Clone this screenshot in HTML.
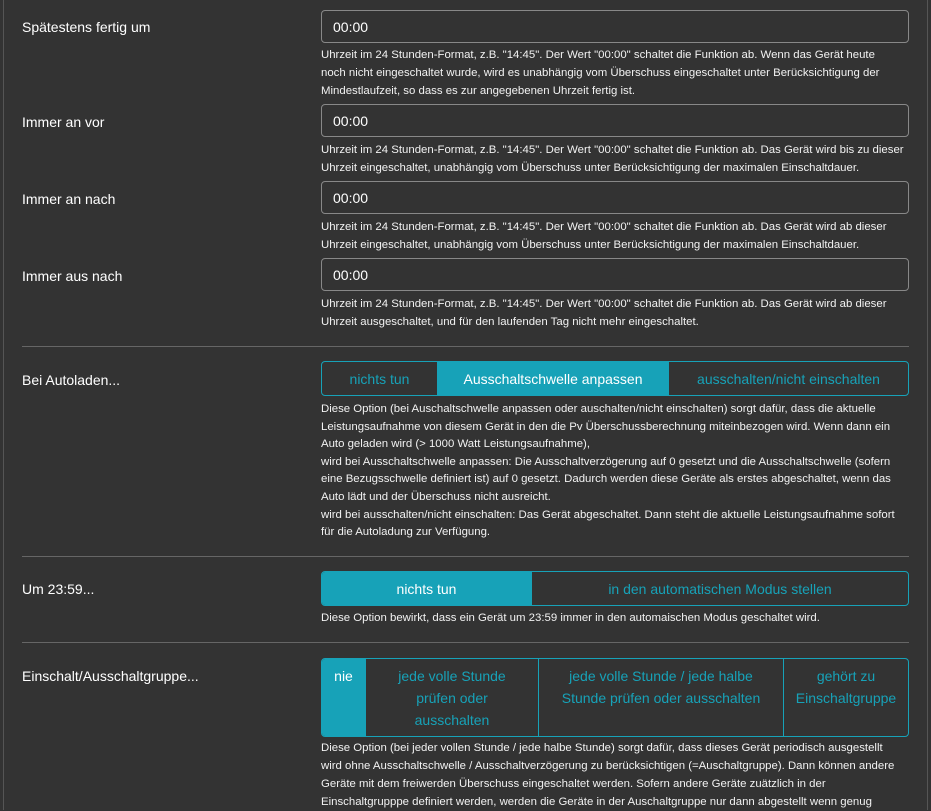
<!DOCTYPE html>
<html><head><meta charset="utf-8"><style>
body{margin:0;width:931px;height:810px;background:#333;overflow:hidden;font-family:"Liberation Sans",sans-serif;color:#fff;position:relative}
.b{position:absolute;top:0;bottom:0;width:1px;background:#555}
.l{position:absolute;left:22px;font-size:14px;line-height:18px}
.in{position:absolute;left:321px;width:586px;height:31px;border:1px solid #888;border-radius:4px;box-sizing:content-box;font-size:14px;line-height:33px;padding-left:0}
.in span{margin-left:11px}
.h{position:absolute;left:321px;width:584px;font-size:11.4px;line-height:18px;color:#f2f2f2}
.hr{position:absolute;left:22px;width:887px;height:1px;background:#666}
.g{position:absolute;left:321px;border:1px solid #17a2b8;border-radius:4px;display:flex;box-sizing:border-box;overflow:hidden}
.g div{display:flex;align-items:center;justify-content:center;text-align:center;color:#17a2b8;font-size:14px;line-height:22px;border-left:1px solid #17a2b8;box-sizing:border-box}
.g div:first-child{border-left:none}
.g div.a{background:#17a2b8;color:#fff}
</style></head><body>
<div class="b" style="left:3px"></div><div class="b" style="left:927px"></div>
<div class="l" style="top:18px">Spätestens fertig um</div>
<div class="in" style="top:10px"><span>00:00</span></div>
<div class="h" style="top:46px">Uhrzeit im 24 Stunden-Format, z.B. "14:45". Der Wert "00:00" schaltet die Funktion ab. Wenn das Gerät heute<br>noch nicht eingeschaltet wurde, wird es unabhängig vom Überschuss eingeschaltet unter Berücksichtigung der<br>Mindestlaufzeit, so dass es zur angegebenen Uhrzeit fertig ist.</div>
<div class="l" style="top:113px">Immer an vor</div>
<div class="in" style="top:104px"><span>00:00</span></div>
<div class="h" style="top:141px">Uhrzeit im 24 Stunden-Format, z.B. "14:45". Der Wert "00:00" schaltet die Funktion ab. Das Gerät wird bis zu dieser Uhrzeit eingeschaltet, unabhängig vom Überschuss unter Berücksichtigung der maximalen Einschaltdauer.</div>
<div class="l" style="top:190px">Immer an nach</div>
<div class="in" style="top:181px"><span>00:00</span></div>
<div class="h" style="top:218px">Uhrzeit im 24 Stunden-Format, z.B. "14:45". Der Wert "00:00" schaltet die Funktion ab. Das Gerät wird ab dieser Uhrzeit eingeschaltet, unabhängig vom Überschuss unter Berücksichtigung der maximalen Einschaltdauer.</div>
<div class="l" style="top:267px">Immer aus nach</div>
<div class="in" style="top:258px"><span>00:00</span></div>
<div class="h" style="top:295px">Uhrzeit im 24 Stunden-Format, z.B. "14:45". Der Wert "00:00" schaltet die Funktion ab. Das Gerät wird ab dieser Uhrzeit ausgeschaltet, und für den laufenden Tag nicht mehr eingeschaltet.</div>
<div class="hr" style="top:346px"></div>
<div class="l" style="top:371px">Bei Autoladen...</div>
<div class="g" style="top:361px;width:588px;height:35px"><div style="width:115px">nichts tun</div><div class="a" style="width:231px">Ausschaltschwelle anpassen</div><div style="flex:1">ausschalten/nicht einschalten</div></div>
<div class="h" style="top:401px;line-height:17.6px">Diese Option (bei Auschaltschwelle anpassen oder auschalten/nicht einschalten) sorgt dafür, dass die aktuelle Leistungsaufnahme von diesem Gerät in den die Pv Überschussberechnung miteinbezogen wird. Wenn dann ein Auto geladen wird (&gt; 1000 Watt Leistungsaufnahme),<br>wird bei Ausschaltschwelle anpassen: Die Ausschaltverzögerung auf 0 gesetzt und die Ausschaltschwelle (sofern eine Bezugsschwelle definiert ist) auf 0 gesetzt. Dadurch werden diese Geräte als erstes abgeschaltet, wenn das Auto lädt und der Überschuss nicht ausreicht.<br>wird bei ausschalten/nicht einschalten: Das Gerät abgeschaltet. Dann steht die aktuelle Leistungsaufnahme sofort für die Autoladung zur Verfügung.</div>
<div class="hr" style="top:556px"></div>
<div class="l" style="top:580px">Um 23:59...</div>
<div class="g" style="top:571px;width:588px;height:35px"><div class="a" style="width:209px">nichts tun</div><div style="flex:1">in den automatischen Modus stellen</div></div>
<div class="h" style="top:609px">Diese Option bewirkt, dass ein Gerät um 23:59 immer in den automaischen Modus geschaltet wird.</div>
<div class="hr" style="top:642px"></div>
<div class="l" style="top:667px">Einschalt/Ausschaltgruppe...</div>
<div class="g" style="top:658px;width:588px;height:79px"><div class="a" style="width:43px;align-items:flex-start;padding-top:6px">nie</div><div style="width:173px">jede volle Stunde<br>prüfen oder<br>ausschalten</div><div style="width:245px;align-self:stretch;align-items:flex-start;padding-top:6px">jede volle Stunde / jede halbe<br>Stunde prüfen oder ausschalten</div><div style="flex:1;align-items:flex-start;padding-top:6px">gehört zu<br>Einschaltgruppe</div></div>
<div class="h" style="top:739px">Diese Option (bei jeder vollen Stunde / jede halbe Stunde) sorgt dafür, dass dieses Gerät periodisch ausgestellt wird ohne Ausschaltschwelle / Ausschaltverzögerung zu berücksichtigen (=Auschaltgruppe). Dann können andere Geräte mit dem freiwerden Überschuss eingeschaltet werden. Sofern andere Geräte zuätzlich in der Einschaltgrupppe definiert werden, werden die Geräte in der Auschaltgruppe nur dann abgestellt wenn genug</div>
</body></html>
